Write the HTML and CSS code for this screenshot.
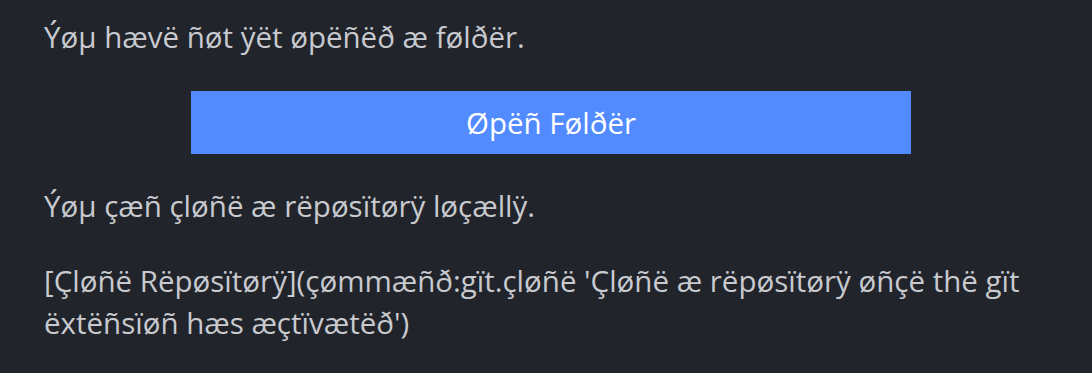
FILE: index.html
```html
<!DOCTYPE html>
<html lang="en">
<head>
<meta charset="utf-8">
<title>Welcome view</title>
<link rel="stylesheet" href="styles.css">
</head>
<body>
<div class="welcome-view">
  <p class="msg">Ýøµ hævë ñøt ÿët øpëñëð æ følðër.</p>
  <div class="button-row">
    <button class="primary-btn" type="button">Øpëñ Følðër</button>
  </div>
  <p class="msg">Ýøµ çæñ çløñë æ rëpøsïtørÿ løçællÿ.</p>
  <p class="msg">[Çløñë Rëpøsïtørÿ](çømmæñð:gït.çløñë 'Çløñë æ rëpøsïtørÿ øñçë thë gït ëxtëñsïøñ hæs æçtïvætëð')</p>
</div>
</body>
</html>
```

FILE: styles.css
```css
html, body {
  margin: 0;
  padding: 0;
  background: #21252b;
  height: 100%;
}

body {
  font-family: "Open Sans", "Noto Sans", "DejaVu Sans", sans-serif;
  font-size: 29.5px;
  color: #c8cacf;
}

.welcome-view {
  padding: 16px 34px 0 44px;
}

.msg {
  margin: 0 0 33px 0;
  line-height: 42px;
}

.button-row {
  display: flex;
  justify-content: center;
  margin-bottom: 31px;
}

.primary-btn {
  width: 100%;
  max-width: 720px;
  height: 63px;
  border: none;
  background: #528bff;
  color: #ffffff;
  font-family: inherit;
  font-size: 29.5px;
  padding: 0;
  cursor: pointer;
}
```
